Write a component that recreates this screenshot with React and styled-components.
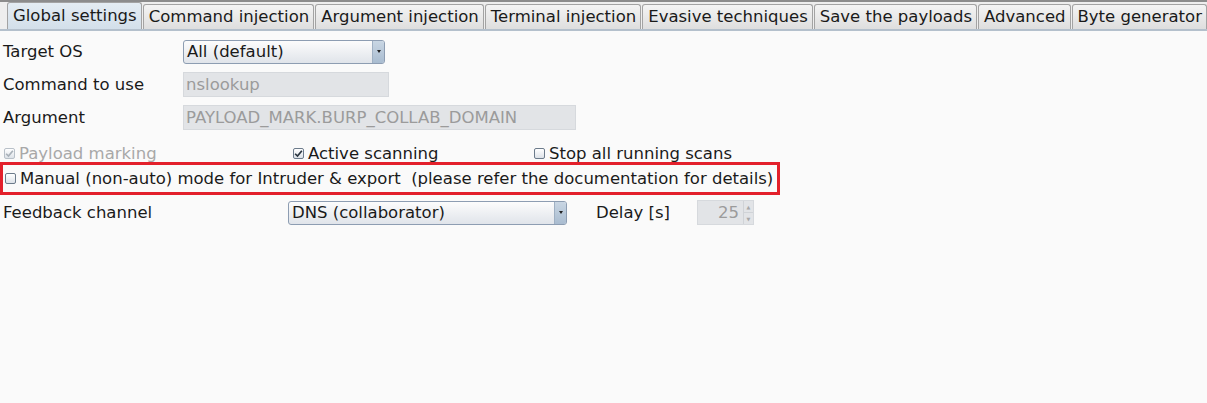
import React from 'react'
import styled, { createGlobalStyle } from 'styled-components'

const Global = createGlobalStyle`
  body {
    margin: 0;
    background: #fafafa;
    font-family: "DejaVu Sans", "Liberation Sans", sans-serif;
    font-size: 16.5px;
    color: #1a1a1a;
  }
`

const tabs = ['Global settings', 'Command injection', 'Argument injection', 'Terminal injection', 'Evasive techniques', 'Save the payloads', 'Advanced', 'Byte generator']

const Page = styled.div`
  width: 1207px;
  height: 403px;
  background: #fafafa;
`

const TabBar = styled.div`
  display: flex;
  align-items: flex-end;
  gap: 1px;
  padding-left: 7px;
  border-top: 2px solid #8c8c8c;
  border-bottom: 2px solid #b4c0cc;
  background: #eeeeee;
  box-sizing: border-box;
  height: 31px;
`

const Tab = styled.div`
  height: ${p => (p.$active ? 27 : 25)}px;
  box-sizing: border-box;
  display: flex;
  align-items: center;
  padding: 0 4px 0 5px;
  border: 1px solid #a3a3a3;
  border-bottom: none;
  border-radius: 3px 3px 0 0;
  background: ${p => (p.$active
    ? 'linear-gradient(#e4ecf3, #d3dfea)'
    : 'linear-gradient(#f4f4f4, #dedede)')};
  white-space: nowrap;
  line-height: 1;
`

const Form = styled.div`
  padding: 8px 0 0 3px;
`

const FieldRow = styled.div`
  display: grid;
  grid-template-columns: 180px auto;
  align-items: center;
  height: 25px;
  margin-bottom: 8px;
`

const Combo = styled.div`
  width: ${p => p.$w}px;
  height: 24px;
  box-sizing: border-box;
  display: flex;
  border: 1px solid #8d9db2;
  border-radius: 3px;
  background: linear-gradient(#fcfcfc, #e0e4ea);
  overflow: hidden;
`

const ComboText = styled.div`
  flex: 1;
  padding-left: 3px;
  line-height: 22px;
`

const ComboArrow = styled.div`
  width: 11px;
  border-left: 1px solid #9fb0c3;
  background: linear-gradient(#c9d6e3, #a9bcd0);
  display: flex;
  align-items: center;
  justify-content: center;
  &::after {
    content: '';
    border-left: 2.5px solid transparent;
    border-right: 2.5px solid transparent;
    border-top: 3px solid #222;
  }
`

const TextField = styled.div`
  width: ${p => p.$w}px;
  height: 25px;
  box-sizing: border-box;
  background: #e2e4e7;
  border: 1px solid #d6d9dd;
  color: #9b9b9b;
  padding-left: 2px;
  line-height: 23px;
`

const CheckRow = styled.div`
  display: grid;
  grid-template-columns: ${p => p.$cols};
  align-items: center;
  height: 18px;
  margin-top: 14px;
`

const Check = styled.label`
  display: flex;
  align-items: center;
  gap: 4px;
  padding-left: 1px;
  color: ${p => (p.$disabled ? '#a8a8a8' : '#1a1a1a')};
  white-space: nowrap;
`

const Box = styled.span`
  width: 11px;
  height: 11px;
  box-sizing: border-box;
  border: 1px solid ${p => (p.$disabled ? '#b8c0c8' : '#6c7b8b')};
  border-radius: 2px;
  background: linear-gradient(#ffffff, #dde2e8);
  display: flex;
  align-items: center;
  justify-content: center;
  svg { display: block; }
`

const Highlight = styled.div`
  width: 780px;
  height: 33px;
  margin-left: -3px;
  box-sizing: border-box;
  border: 3px solid #e3202b;
  display: flex;
  align-items: center;
  padding-left: 1px;
`

const FeedbackRow = styled.div`
  display: grid;
  grid-template-columns: 285px 308px 101px auto;
  align-items: center;
  height: 25px;
  margin-top: 5px;
`

const Spinner = styled.div`
  width: 57px;
  height: 25px;
  box-sizing: border-box;
  display: flex;
  background: #e2e4e7;
  border: 1px solid #d6d9dd;
  color: #9b9b9b;
`

const SpinValue = styled.div`
  flex: 1;
  text-align: right;
  padding-right: 4px;
  line-height: 23px;
`

const SpinButtons = styled.div`
  width: 9px;
  display: flex;
  flex-direction: column;
  border-left: 1px solid #d0d3d7;
  span {
    flex: 1;
    display: flex;
    align-items: center;
    justify-content: center;
    font-size: 5px;
    color: #a8a8a8;
  }
  span + span { border-top: 1px solid #d0d3d7; }
`

const CheckBox = ({ checked, disabled, children }) => (
  <Check $disabled={disabled}>
    <Box $disabled={disabled}>
      {checked && (
        <svg width="9" height="9" viewBox="0 0 8 8">
          <path d="M1 4.2 L3.1 6.3 L7 1.5" fill="none" stroke={disabled ? '#a9b1b9' : '#2a3540'} strokeWidth="1.5" />
        </svg>
      )}
    </Box>
    {children}
  </Check>
)

export default function App() {
  return (
    <Page>
      <Global />
      <TabBar>
        {tabs.map((t, i) => (
          <Tab key={t} $active={i === 0}>{t}</Tab>
        ))}
      </TabBar>
      <Form>
        <FieldRow>
          <span>Target OS</span>
          <Combo $w={202}>
            <ComboText>All (default)</ComboText>
            <ComboArrow />
          </Combo>
        </FieldRow>
        <FieldRow>
          <span>Command to use</span>
          <TextField $w={206}>nslookup</TextField>
        </FieldRow>
        <FieldRow>
          <span>Argument</span>
          <TextField $w={393}>PAYLOAD_MARK.BURP_COLLAB_DOMAIN</TextField>
        </FieldRow>
        <CheckRow $cols="289px 241px auto">
          <CheckBox checked disabled>Payload marking</CheckBox>
          <CheckBox checked>Active scanning</CheckBox>
          <CheckBox>Stop all running scans</CheckBox>
        </CheckRow>
        <Highlight>
          <CheckBox>Manual (non-auto) mode for Intruder &amp; export&nbsp; (please refer the documentation for details)</CheckBox>
        </Highlight>
        <FeedbackRow>
          <span>Feedback channel</span>
          <Combo $w={279}>
            <ComboText>DNS (collaborator)</ComboText>
            <ComboArrow />
          </Combo>
          <span>Delay [s]</span>
          <Spinner>
            <SpinValue>25</SpinValue>
            <SpinButtons>
              <span>▲</span>
              <span>▼</span>
            </SpinButtons>
          </Spinner>
        </FeedbackRow>
      </Form>
    </Page>
  )
}
